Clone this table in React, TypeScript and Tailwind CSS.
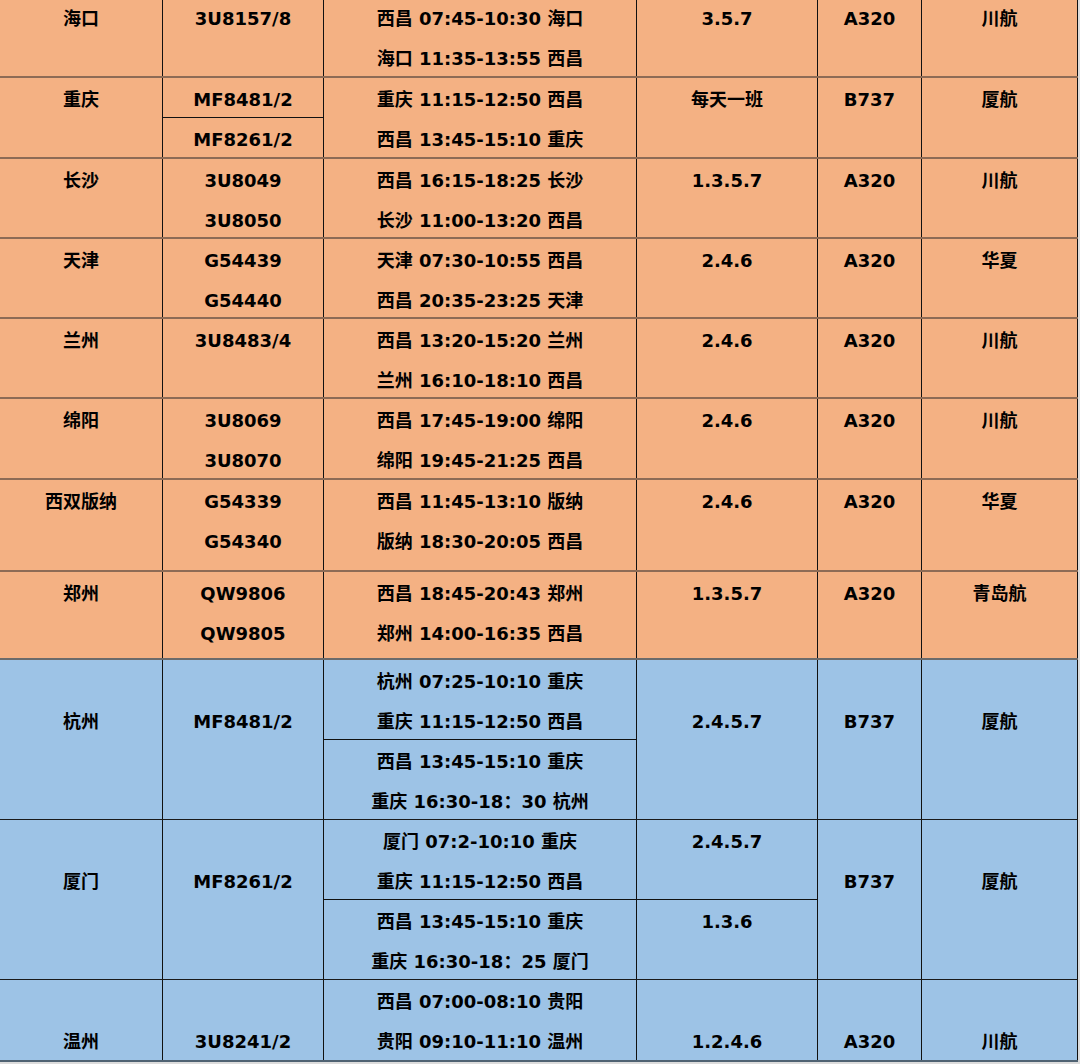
const ORANGE = 'bg-[#f4b183]';
const BLUE = 'bg-[#9dc3e6]';

const WIDTHS = ['w-[163px]', 'w-[161px]', 'w-[313px]', 'w-[181px]', 'w-[104px]', 'w-[156px]'];

type Sub = { h: string; lines: string[] };
type Cell = string[] | Sub[];

type Row = { h: string; bg: string; edge: string; cells: Cell[] };

const ROWS: Row[] = [
  {
    h: 'h-[81px]', bg: ORANGE, edge: 'border-b-2 border-[#8d6b55]',
    cells: [['海口'], ['3U8157/8'], ['西昌 07:45-10:30 海口', '海口 11:35-13:55 西昌'], ['3.5.7'], ['A320'], ['川航']],
  },
  {
    h: 'h-[81px]', bg: ORANGE, edge: 'border-b-2 border-[#8d6b55]',
    cells: [
      ['重庆'],
      [{ h: 'h-[40px]', lines: ['MF8481/2'] }, { h: 'flex-1', lines: ['MF8261/2'] }],
      ['重庆 11:15-12:50 西昌', '西昌 13:45-15:10 重庆'],
      ['每天一班'], ['B737'], ['厦航'],
    ],
  },
  {
    h: 'h-[80px]', bg: ORANGE, edge: 'border-b-2 border-[#8d6b55]',
    cells: [['长沙'], ['3U8049', '3U8050'], ['西昌 16:15-18:25 长沙', '长沙 11:00-13:20 西昌'], ['1.3.5.7'], ['A320'], ['川航']],
  },
  {
    h: 'h-[80px]', bg: ORANGE, edge: 'border-b-2 border-[#8d6b55]',
    cells: [['天津'], ['G54439', 'G54440'], ['天津 07:30-10:55 西昌', '西昌 20:35-23:25 天津'], ['2.4.6'], ['A320'], ['华夏']],
  },
  {
    h: 'h-[80px]', bg: ORANGE, edge: 'border-b-2 border-[#8d6b55]',
    cells: [['兰州'], ['3U8483/4'], ['西昌 13:20-15:20 兰州', '兰州 16:10-18:10 西昌'], ['2.4.6'], ['A320'], ['川航']],
  },
  {
    h: 'h-[81px]', bg: ORANGE, edge: 'border-b-2 border-[#8d6b55]',
    cells: [['绵阳'], ['3U8069', '3U8070'], ['西昌 17:45-19:00 绵阳', '绵阳 19:45-21:25 西昌'], ['2.4.6'], ['A320'], ['川航']],
  },
  {
    h: 'h-[92px]', bg: ORANGE, edge: 'border-b-2 border-[#8d6b55]',
    cells: [['西双版纳'], ['G54339', 'G54340'], ['西昌 11:45-13:10 版纳', '版纳 18:30-20:05 西昌'], ['2.4.6'], ['A320'], ['华夏']],
  },
  {
    h: 'h-[88px]', bg: ORANGE, edge: 'border-b-2 border-[#6b6b6b]',
    cells: [['郑州'], ['QW9806', 'QW9805'], ['西昌 18:45-20:43 郑州', '郑州 14:00-16:35 西昌'], ['1.3.5.7'], ['A320'], ['青岛航']],
  },
  {
    h: 'h-[160px]', bg: BLUE, edge: 'border-b border-[#1a1a1a]',
    cells: [
      ['', '杭州'],
      ['', 'MF8481/2'],
      [
        { h: 'h-[80px]', lines: ['杭州 07:25-10:10 重庆', '重庆 11:15-12:50 西昌'] },
        { h: 'flex-1', lines: ['西昌 13:45-15:10 重庆', '重庆 16:30-18：30 杭州'] },
      ],
      ['', '2.4.5.7'], ['', 'B737'], ['', '厦航'],
    ],
  },
  {
    h: 'h-[160px]', bg: BLUE, edge: 'border-b border-[#1a1a1a]',
    cells: [
      ['', '厦门'],
      ['', 'MF8261/2'],
      [
        { h: 'h-[80px]', lines: ['厦门 07:2-10:10 重庆', '重庆 11:15-12:50 西昌'] },
        { h: 'flex-1', lines: ['西昌 13:45-15:10 重庆', '重庆 16:30-18：25 厦门'] },
      ],
      [
        { h: 'h-[80px]', lines: ['2.4.5.7'] },
        { h: 'flex-1', lines: ['1.3.6'] },
      ],
      ['', 'B737'], ['', '厦航'],
    ],
  },
  {
    h: 'h-[82px]', bg: BLUE, edge: 'border-b-2 border-[#4f6272]',
    cells: [['', '温州'], ['', '3U8241/2'], ['西昌 07:00-08:10 贵阳', '贵阳 09:10-11:10 温州'], ['', '1.2.4.6'], ['', 'A320'], ['', '川航']],
  },
];

function Lines({ lines }: { lines: string[] }) {
  return (
    <>
      {lines.map((t, i) => (
        <div key={i} className="h-[40px] whitespace-nowrap text-center leading-[44px]">
          {t}
        </div>
      ))}
    </>
  );
}

function isSubs(c: Cell): c is Sub[] {
  return typeof c[0] === 'object';
}

export default function App() {
  return (
    <div
      className="h-[1064px] w-[1080px] overflow-hidden bg-[#dcdcdc] text-[18px] font-bold text-black"
      style={{ fontFamily: '"DejaVu Sans", "Noto Sans CJK SC", sans-serif' }}
    >
      <div className="-mt-[3px] w-[1078px]">
        {ROWS.map((r, ri) => (
          <div key={ri} className={`flex ${r.h} ${r.bg} ${r.edge}`}>
            {r.cells.map((c, ci) => (
              <div key={ci} className={`flex flex-col border-r border-[#111] ${WIDTHS[ci]}`}>
                {isSubs(c) ? (
                  c.map((s, si) => (
                    <div
                      key={si}
                      className={`flex flex-col ${s.h} ${si === 0 ? 'border-b border-[#111]' : ''}`}
                    >
                      <Lines lines={s.lines} />
                    </div>
                  ))
                ) : (
                  <Lines lines={c} />
                )}
              </div>
            ))}
          </div>
        ))}
      </div>
    </div>
  );
}
